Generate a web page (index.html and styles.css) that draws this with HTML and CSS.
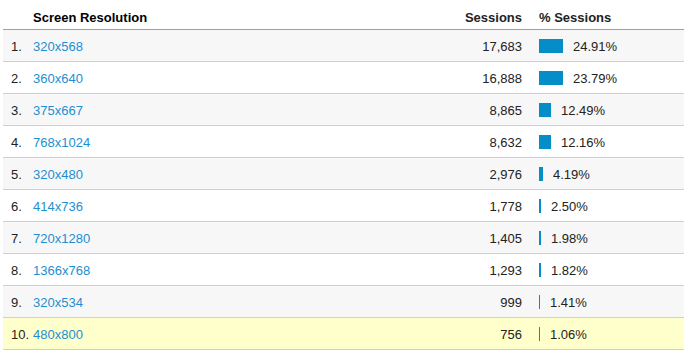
FILE: index.html
```html
<!DOCTYPE html>
<html>
<head>
<meta charset="utf-8">
<link rel="stylesheet" href="styles.css">
</head>
<body>
<div class="table">
  <div class="row head">
    <div class="c-num"></div>
    <div class="c-name">Screen Resolution</div>
    <div class="c-sess">Sessions</div>
    <div class="c-pct">% Sessions</div>
  </div>
  <div class="row odd"><div class="c-num">1.</div><div class="c-name"><a>320x568</a></div><div class="c-sess">17,683</div><div class="c-pct"><span class="bar" style="width:24px"></span>24.91%</div></div>
  <div class="row"><div class="c-num">2.</div><div class="c-name"><a>360x640</a></div><div class="c-sess">16,888</div><div class="c-pct"><span class="bar" style="width:24px"></span>23.79%</div></div>
  <div class="row odd"><div class="c-num">3.</div><div class="c-name"><a>375x667</a></div><div class="c-sess">8,865</div><div class="c-pct"><span class="bar" style="width:12px"></span>12.49%</div></div>
  <div class="row"><div class="c-num">4.</div><div class="c-name"><a>768x1024</a></div><div class="c-sess">8,632</div><div class="c-pct"><span class="bar" style="width:12px"></span>12.16%</div></div>
  <div class="row odd"><div class="c-num">5.</div><div class="c-name"><a>320x480</a></div><div class="c-sess">2,976</div><div class="c-pct"><span class="bar" style="width:4px"></span>4.19%</div></div>
  <div class="row"><div class="c-num">6.</div><div class="c-name"><a>414x736</a></div><div class="c-sess">1,778</div><div class="c-pct"><span class="bar" style="width:2px"></span>2.50%</div></div>
  <div class="row odd"><div class="c-num">7.</div><div class="c-name"><a>720x1280</a></div><div class="c-sess">1,405</div><div class="c-pct"><span class="bar" style="width:2px"></span>1.98%</div></div>
  <div class="row"><div class="c-num">8.</div><div class="c-name"><a>1366x768</a></div><div class="c-sess">1,293</div><div class="c-pct"><span class="bar" style="width:2px"></span>1.82%</div></div>
  <div class="row odd"><div class="c-num">9.</div><div class="c-name"><a>320x534</a></div><div class="c-sess">999</div><div class="c-pct"><span class="bar" style="width:1px"></span>1.41%</div></div>
  <div class="row hl"><div class="c-num">10.</div><div class="c-name"><a>480x800</a></div><div class="c-sess">756</div><div class="c-pct"><span class="bar" style="width:1px"></span>1.06%</div></div>
</div>
</body>
</html>
```

FILE: styles.css
```css
html, body {
  margin: 0;
  padding: 0;
  background: #fff;
}
body {
  font-family: "Liberation Sans", Arial, sans-serif;
  font-size: 13px;
  color: #333;
  padding-left: 3px;
}
.table {
  width: 681px;
}
.row {
  display: grid;
  grid-template-columns: 30px 426px 80px 145px;
  height: 31px;
  border-bottom: 1px solid #d0d0d0;
  line-height: 29px;
  padding-top: 2px;
  box-sizing: border-box;
  height: 32px;
}
.row.head {
  height: 30px;
  padding-top: 10px;
  line-height: 15px;
  font-weight: bold;
  color: #000;
  border-bottom: 1px solid #a0a0a0;
}
.row.odd { background: #f7f7f7; }
.row.hl { background: #ffffcc; }
.c-num {
  padding-left: 8px;
  white-space: nowrap;
  color: #222;
}
.c-name a {
  color: #1d8fd1;
  text-decoration: none;
}
.c-sess {
  text-align: right;
  padding-right: 17px;
  color: #222;
}
.c-pct {
  display: flex;
  align-items: center;
  gap: 10px;
  color: #222;
}
.head .c-pct { display: block; }
.bar {
  display: block;
  height: 14px;
  background: #058dc7;
  margin-top: -1px;
}
```
